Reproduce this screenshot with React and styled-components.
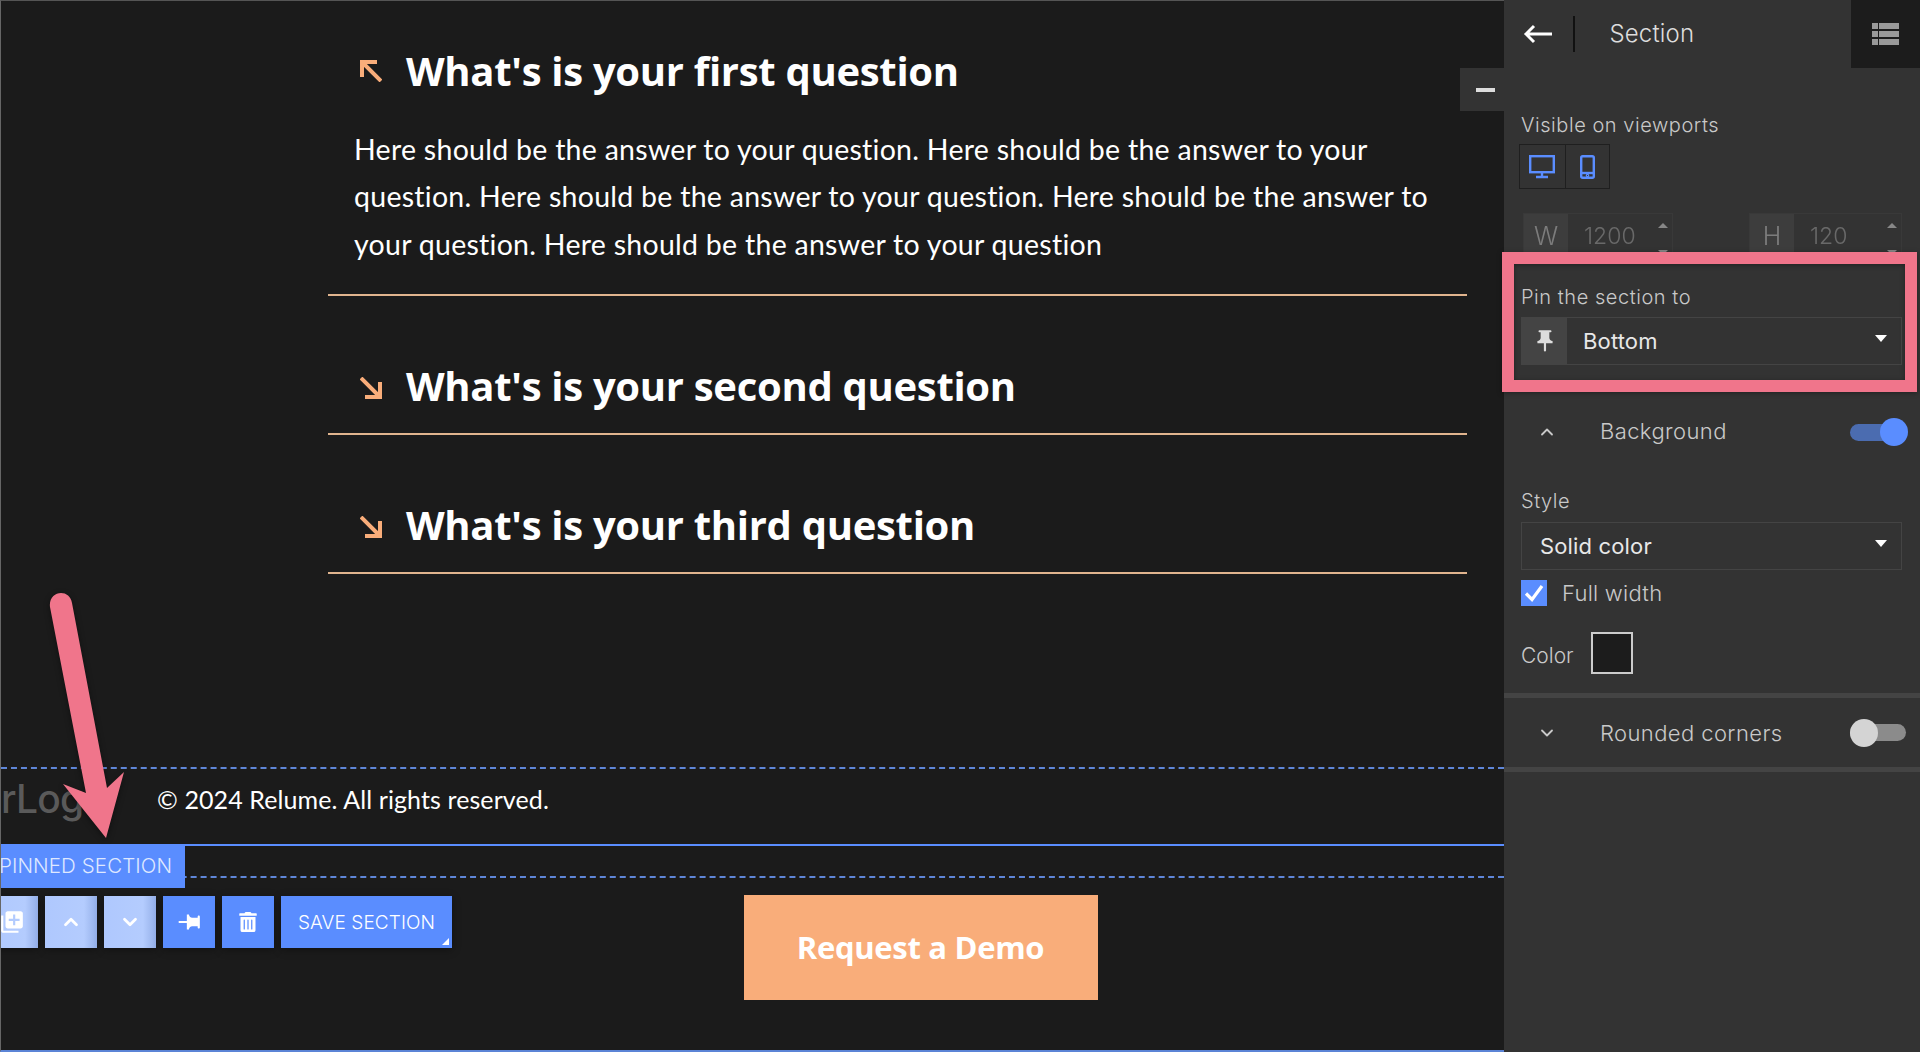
import React from "react";
import styled, { createGlobalStyle } from "styled-components";
import { ChevronUp, ChevronDown } from "lucide-react";
import { MdPushPin, MdLibraryAdd } from "react-icons/md";
import { FaTrashAlt } from "react-icons/fa";

const Global = createGlobalStyle`
  html, body { margin: 0; padding: 0; background: #1b1b1b; }
  * { box-sizing: border-box; }
`;
const DISPLAY = `"Lato", "Open Sans", sans-serif`;
const UI = `"Inter", "Noto Sans", sans-serif`;
const BLUE = "#5a8dff";
const PEACH = "#f9ad7a";

const Page = styled.div`
  position: relative; width: 1920px; height: 1052px; display: flex; overflow: hidden;
  background: #1b1b1b;
`;
const Canvas = styled.main`
  position: relative; width: 1504px; height: 1052px; flex: none; display: flex; flex-direction: column;
  overflow: hidden; border-top: 1px solid #555; border-left: 1px solid #666; border-bottom: 2px solid #5b84d6;
  color: #fff; font-family: ${DISPLAY};
`;
const Faq = styled.section`
  flex: 1; padding: 0 37px 0 327px;
`;
const Item = styled.article`
  border-bottom: 2px solid #e0b48e; padding-top: ${p => p.$open ? "46px" : "66px"};
  height: ${p => p.$open ? "295px" : "139px"};
`;
const Question = styled.div`
  display: flex; align-items: center; gap: 24px; padding-left: 32px; height: 48px;
`;
const Heading = styled.h3`
  margin: 0; font: 700 40px/48px "Open Sans", sans-serif; letter-spacing: -.3px; white-space: nowrap;
`;
const Answer = styled.p`
  margin: 31px 0 0 26px; font-size: 28.5px; line-height: 47.3px; font-weight: 400; letter-spacing: .27px;
  color: #fff;
  span { display: block; white-space: nowrap; }
`;
const Footer = styled.footer`
  height: 77px; flex: none; border-top: 2px dashed #5f86d8; display: flex; align-items: center; padding-bottom: 15px;
`;
const Logo = styled.div`
  width: 156px; flex: none; font: 500 39px/48px ${UI}; color: #5a5a5a; letter-spacing: -.8px;
`;
const Copyright = styled.div`
  font-size: 25px; font-weight: 400; letter-spacing: .1px; white-space: nowrap;
`;
const Pinned = styled.section`
  position: relative; height: 206px; flex: none; border-top: 2px solid #5a8dff; padding-top: 30px;
`;
const PinnedInner = styled.div`
  height: 174px; border-top: 2px dashed #5f86d8; display: flex; justify-content: center; padding: 17px 0 0 336px;
`;
const Cta = styled.a`
  width: 354px; height: 105px; background: ${PEACH}; color: #fff; display: flex; align-items: center; justify-content: center;
  font: 700 31px "Open Sans", sans-serif; letter-spacing: -.3px; padding-bottom: 2px;
`;
const Tag = styled.div`
  position: absolute; left: -2px; top: -2px; width: 186px; height: 44px; background: ${BLUE}; color: #dfe8ff;
  font: 300 20.5px/44px ${UI}; white-space: nowrap; letter-spacing: .1px;
`;
const Toolbar = styled.div`
  position: absolute; left: -15px; top: 50px; display: flex; gap: 7px;
`;
const ToolButton = styled.button`
  position: relative; width: 52px; height: 52px; border: 0; padding: 0; display: flex; align-items: center; justify-content: center;
  background: ${p => p.$faded ? "linear-gradient(90deg,#afc8fe 0%,#b4ccfe 75%,#94afe8 100%)" : BLUE};
  color: #fff; box-shadow: 0 2px 8px rgba(0,0,0,.35);
  font: 300 19px/1 ${UI}; letter-spacing: .1px;
`;
const SaveButton = styled(ToolButton)`
  width: 171px;
  &::after { content: ""; position: absolute; right: 3px; bottom: 3px; border-left: 7px solid transparent; border-bottom: 7px solid #fff; }
`;
const Panel = styled.aside`
  position: relative; width: 416px; height: 1052px; flex: none; background: #333; color: #c9c9c9; font-family: ${UI};
`;
const Collapse = styled.button`
  position: absolute; left: -44px; top: 68px; width: 44px; height: 43px; border: 0; background: #333; display: flex; align-items: center; justify-content: center; padding: 0 0 0 7px;
  &::before { content: ""; width: 19px; height: 4px; background: #ddd; }
`;
const Header = styled.header`
  height: 68px; display: flex; align-items: center; padding-left: 19px;
`;
const HeaderDivider = styled.div`
  width: 1.5px; height: 36px; background: #111; margin: 0 35px 0 20px;
`;
const Title = styled.div`
  flex: 1; font-size: 24px; font-weight: 300; color: #ddd; letter-spacing: .15px; margin-top: -2px;
`;
const LayersBox = styled.div`
  width: 69px; height: 68px; background: #1c1c1c; display: flex; align-items: center; justify-content: center; margin-top: -1px;
`;
const Body = styled.div`
  padding: 0 18px 0 17px;
`;
const Label = styled.div`
  font-size: 20px; line-height: 24px; font-weight: 300; color: #c9c9c9; letter-spacing: .55px;
`;
const ViewportGroup = styled.div`
  display: inline-flex; margin: 7px 0 0 -2px; border: 1.5px solid #1f1f1f;
`;
const ViewportButton = styled.div`
  width: 44.5px; height: 43px; display: flex; align-items: center; justify-content: center;
  & + & { border-left: 1.5px solid #1f1f1f; }
`;
const SizeRow = styled.div`
  display: flex; justify-content: space-between; margin: 24px 0 0 2px; height: 46px; opacity: .62;
`;
const SizeField = styled.div`
  position: relative; width: ${p => p.$w}px; height: 46px; display: flex; align-items: center; border: 1px solid #3d3d3d; color: #8a8a8a;
`;
const SizeKey = styled.div`
  width: 44px; height: 100%; background: #444; display: flex; align-items: center; justify-content: center; font-size: 25px; font-weight: 300;
  color: #aaa;
`;
const SizeValue = styled.div`
  margin-left: 16px; font-size: 23px; font-weight: 300;
`;
const Spin = styled.div`
  position: absolute; right: 4px; ${p => p.$down ? "bottom: 3px" : "top: 9px"};
  border-left: 5px solid transparent; border-right: 5px solid transparent;
  ${p => p.$down ? "border-top: 5px solid #bbb" : "border-bottom: 5px solid #bbb"};
`;
const PinLabel = styled(Label)`
  margin-top: 26px;
`;
const Select = styled.div`
  margin-top: ${p => p.$mt || 8}px; height: 48px; display: flex; align-items: center; border: 1.5px solid #444; color: #e8e8e8;
  font-size: 22px; font-weight: 400; padding-right: 14px; letter-spacing: .15px;
  position: relative;
  &::after { content: ""; margin-left: auto; margin-bottom: 6px; border-left: 6.5px solid transparent; border-right: 6.5px solid transparent; border-top: 7px solid #fff; }
`;
const SelectIcon = styled.div`
  width: 45px; height: 100%; flex: none; background: #444; display: flex; align-items: center; justify-content: center; color: #ddd;
`;
const SelectText = styled.div`
  padding-left: ${p => p.$pl}px;
`;
const Highlight = styled.div`
  position: absolute; left: -2px; top: 252px; width: 415px; height: 140px; border: 12px solid #f0758b; pointer-events: none;
  box-shadow: 0 1px 5px rgba(0,0,0,.35), inset 0 1px 5px rgba(0,0,0,.35);
`;
const AccordionHead = styled.div`
  display: flex; align-items: center; height: ${p => p.$h}px; padding-left: 33px; font-size: 22px; font-weight: 300; color: #c9c9c9; letter-spacing: .4px;
  span { margin-left: 43px; flex: 1; margin-top: ${p => p.$tm}px; }
  margin-top: ${p => p.$mt || 0}px;
`;
const Switch = styled.div`
  position: relative; width: 56px; height: 17px; border-radius: 9px; margin-right: 14px;
  background: ${p => p.$on ? "#4b6cb0" : "#8b8b8b"};
  &::after {
    content: ""; position: absolute; top: -5.5px; ${p => p.$on ? "right: -2px" : "left: 0"};
    width: 28px; height: 28px; border-radius: 50%; background: ${p => p.$on ? BLUE : "#d4d4d4"};
  }
`;
const CheckRow = styled.div`
  display: flex; align-items: center; gap: 15px; margin-top: 10px; font-size: 22px; font-weight: 300; letter-spacing: .25px; color: #c9c9c9;
`;
const Checkbox = styled.div`
  width: 26px; height: 26px; background: ${BLUE}; display: flex; align-items: center; justify-content: center;
`;
const ColorRow = styled.div`
  display: flex; align-items: center; gap: 17px; margin-top: 26px; font-size: 21px; font-weight: 300; color: #c9c9c9;
  span { margin-top: 4px; }
`;
const Swatch = styled.div`
  width: 42px; height: 42px; background: #1c1c1c; border: 2px solid #ccc;
`;
const Rule = styled.div`
  height: 5px; background: #444; margin-top: ${p => p.$mt}px;
`;
const ArrowWrap = styled.svg`
  position: absolute; left: 0; top: 0; pointer-events: none; filter: drop-shadow(0 2px 3px rgba(0,0,0,.4));
`;
const CornerIcon = styled.svg`
  flex: none; transform: ${p => p.$up ? "none" : "rotate(180deg)"}; margin-top: ${p => p.$up ? 0 : 3}px;
`;

const Corner = ({ up }) => (
  <CornerIcon $up={up} width="22" height="22" viewBox="0 0 22 22" fill="none" stroke={PEACH} strokeWidth="4">
    <path d="M2 17V2h15M3 3l18 18" />
  </CornerIcon>
);

const QUESTIONS = ["What's is your first question", "What's is your second question", "What's is your third question"];

export default function App() {
  return (
    <Page>
      <Global />
      <Canvas>
        <Faq>
          <Item $open>
            <Question><Corner up /><Heading>{QUESTIONS[0]}</Heading></Question>
            <Answer>
              <span>Here should be the answer to your question. Here should be the answer to your</span>
              <span>question. Here should be the answer to your question. Here should be the answer to</span>
              <span>your question. Here should be the answer to your question</span>
            </Answer>
          </Item>
          <Item>
            <Question><Corner /><Heading>{QUESTIONS[1]}</Heading></Question>
          </Item>
          <Item>
            <Question><Corner /><Heading>{QUESTIONS[2]}</Heading></Question>
          </Item>
        </Faq>
        <Footer>
          <Logo>rLog</Logo>
          <Copyright>© 2024 Relume. All rights reserved.</Copyright>
        </Footer>
        <Pinned>
          <PinnedInner><Cta>Request a Demo</Cta></PinnedInner>
          <Tag>PINNED SECTION</Tag>
          <Toolbar>
            <ToolButton $faded><MdLibraryAdd size={26} /></ToolButton>
            <ToolButton $faded><ChevronUp size={22} strokeWidth={3} /></ToolButton>
            <ToolButton $faded><ChevronDown size={22} strokeWidth={3} /></ToolButton>
            <ToolButton><MdPushPin size={26} style={{ transform: "rotate(90deg)" }} /></ToolButton>
            <ToolButton><FaTrashAlt size={20} /></ToolButton>
            <SaveButton>SAVE SECTION</SaveButton>
          </Toolbar>
        </Pinned>
      </Canvas>
      <Panel>
        <Collapse aria-label="collapse" />
        <Header>
          <svg width="30" height="20" viewBox="0 0 30 20" fill="none" stroke="#fff" strokeWidth="3"><path d="M29 10H3M11 2l-8 8 8 8" /></svg>
          <HeaderDivider />
          <Title>Section</Title>
          <LayersBox>
            <svg width="27" height="22" viewBox="0 0 27 22" fill="#999">
              <rect x="0" y="0" width="6" height="6" /><rect x="7" y="0" width="20" height="6" />
              <rect x="0" y="8" width="6" height="6" /><rect x="7" y="8" width="20" height="6" />
              <rect x="0" y="16" width="6" height="6" /><rect x="7" y="16" width="20" height="6" />
            </svg>
          </LayersBox>
        </Header>
        <Body>
          <Label style={{ marginTop: 45 }}>Visible on viewports</Label>
          <ViewportGroup>
            <ViewportButton>
              <svg width="26" height="24" viewBox="0 0 26 24" fill="none" stroke="#5a8dff" strokeWidth="2.4"><rect x="1.2" y="1.2" width="23.6" height="16" /><path d="M13 18v3M7 22h12" /></svg>
            </ViewportButton>
            <ViewportButton>
              <svg width="15" height="24" viewBox="0 0 15 24" fill="none" stroke="#5a8dff" strokeWidth="2.4"><rect x="1.2" y="1.2" width="12.6" height="21.6" rx="1.5" /><path d="M1 18h13" /><circle cx="7.5" cy="20.5" r=".6" /></svg>
            </ViewportButton>
          </ViewportGroup>
          <SizeRow>
            <SizeField $w={150}><SizeKey>W</SizeKey><SizeValue>1200</SizeValue><Spin /><Spin $down /></SizeField>
            <SizeField $w={153}><SizeKey>H</SizeKey><SizeValue>120</SizeValue><Spin /><Spin $down /></SizeField>
          </SizeRow>
          <PinLabel>Pin the section to</PinLabel>
          <Select>
            <SelectIcon><MdPushPin size={26} /></SelectIcon>
            <SelectText $pl={16}>Bottom</SelectText>
          </Select>
        </Body>
        <AccordionHead $h={56} $mt={39} $tm={-2}>
          <ChevronUp size={20} strokeWidth={2.2} />
          <span>Background</span>
          <Switch $on />
        </AccordionHead>
        <Body>
          <Label style={{ marginTop: 29 }}>Style</Label>
          <Select $mt={9}><SelectText $pl={18}>Solid color</SelectText></Select>
          <CheckRow>
            <Checkbox>
              <svg width="20" height="18" viewBox="0 0 20 18" fill="none" stroke="#fff" strokeWidth="3.2"><path d="M2 9.5l6 6L18 2" /></svg>
            </Checkbox>
            Full width
          </CheckRow>
          <ColorRow><span>Color</span><Swatch /></ColorRow>
        </Body>
        <Rule $mt={19} />
        <AccordionHead $h={69} $tm={0}>
          <ChevronDown size={20} strokeWidth={2.2} />
          <span>Rounded corners</span>
          <Switch />
        </AccordionHead>
        <Rule $mt={0} />
        <Highlight />
      </Panel>
      <ArrowWrap width="140" height="860" viewBox="0 0 140 860">
        <path d="M50 607 C48 590 70 588 72 603 L107 788 L124 772 L106 838 L63 784 L86 793 Z" fill="#f0758b" />
      </ArrowWrap>
    </Page>
  );
}
